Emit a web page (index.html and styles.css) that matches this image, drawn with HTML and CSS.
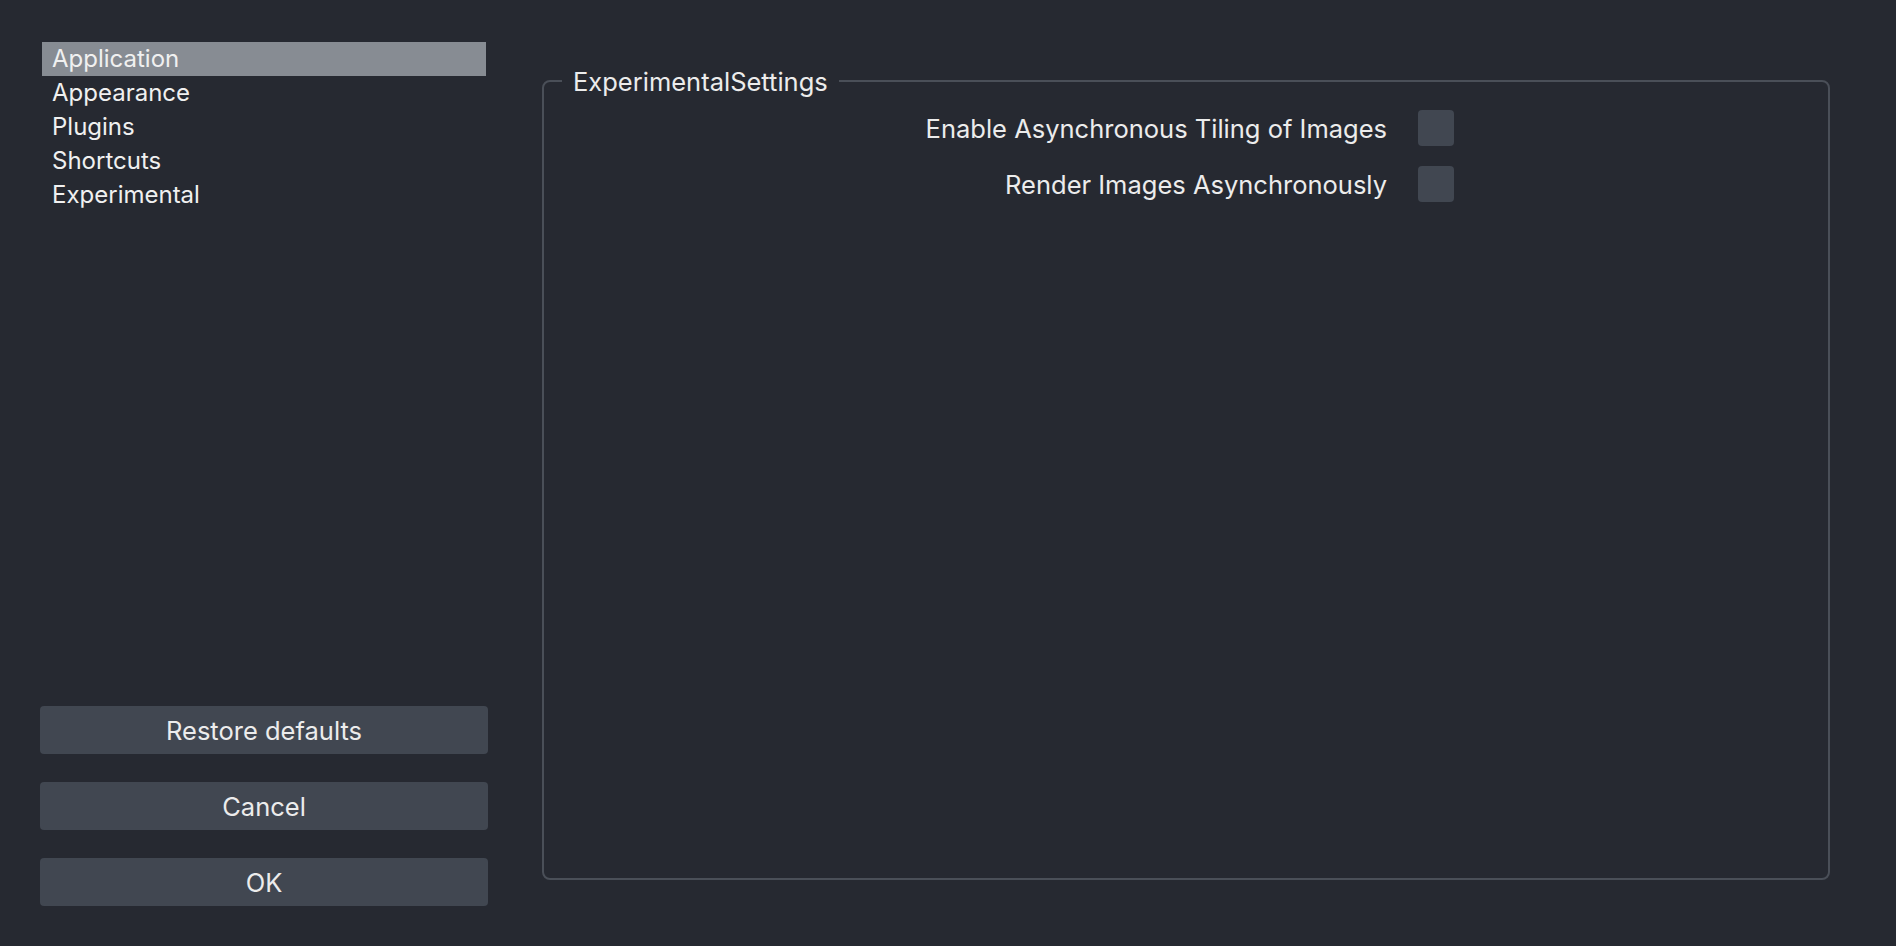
FILE: index.html
```html
<!DOCTYPE html>
<html lang="en">
<head>
<meta charset="utf-8">
<title>Preferences</title>
<link rel="stylesheet" href="styles.css">
</head>
<body>
<div class="window">
  <aside class="sidebar">
    <ul class="nav">
      <li class="nav-item selected">Application</li>
      <li class="nav-item">Appearance</li>
      <li class="nav-item">Plugins</li>
      <li class="nav-item">Shortcuts</li>
      <li class="nav-item">Experimental</li>
    </ul>
    <div class="actions">
      <button class="btn">Restore defaults</button>
      <button class="btn">Cancel</button>
      <button class="btn">OK</button>
    </div>
  </aside>
  <fieldset class="group">
    <legend class="group-title">ExperimentalSettings</legend>
    <div class="form">
      <label class="form-label" for="c1">Enable Asynchronous Tiling of Images</label>
      <span class="checkbox" id="c1"></span>
      <label class="form-label" for="c2">Render Images Asynchronously</label>
      <span class="checkbox" id="c2"></span>
    </div>
  </fieldset>
</div>
</body>
</html>
```

FILE: styles.css
```css
html, body {
  margin: 0;
  padding: 0;
  background: #262931;
}

body {
  font-family: Inter, "Noto Sans", "Liberation Sans", sans-serif;
  color: #ececec;
}

.window {
  display: flex;
  height: 946px;
  box-sizing: border-box;
}

.sidebar {
  width: 448px;
  margin-left: 40px;
  padding: 42px 0 40px;
  box-sizing: border-box;
  display: flex;
  flex-direction: column;
  flex-shrink: 0;
}

.nav {
  list-style: none;
  margin: 0 2px;
  padding: 0;
}

.nav-item {
  height: 34px;
  line-height: 33px;
  font-size: 24px;
  padding-left: 10px;
  color: #f0f0f0;
}

.nav-item.selected {
  background: #878c93;
}

.actions {
  margin-top: auto;
  display: flex;
  flex-direction: column;
  gap: 28px;
}

.btn {
  height: 48px;
  border: none;
  border-radius: 4px;
  background: #414751;
  color: #ececec;
  font-family: inherit;
  font-size: 25.5px;
  padding: 0;
}

.group {
  flex: 1;
  min-width: 0;
  margin: 63px 66px 66px 54px;
  border: 2px solid #4a4f58;
  border-radius: 8px;
  padding: 11px 0 0 0;
}

.group-title {
  margin-left: 18px;
  padding: 3px 11px 1px;
  font-size: 25.5px;
  line-height: 32px;
}

.form {
  display: grid;
  grid-template-columns: 843px 36px;
  column-gap: 31px;
  row-gap: 20px;
}

.form-label {
  text-align: right;
  font-size: 25.5px;
  line-height: 36px;
  height: 36px;
  padding-top: 1px;
  box-sizing: border-box;
}

.checkbox {
  width: 36px;
  height: 36px;
  border-radius: 4px;
  background: #414751;
}
```
